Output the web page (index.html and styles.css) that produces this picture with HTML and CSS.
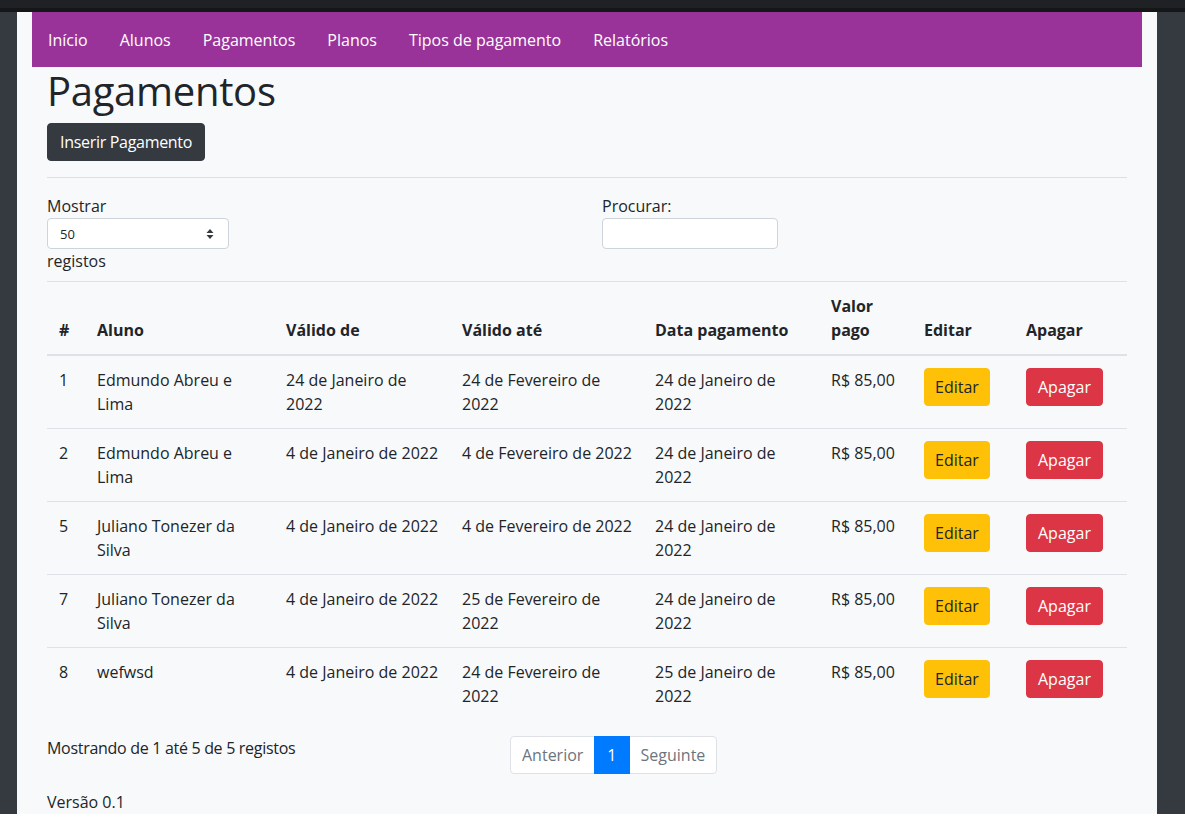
FILE: index.html
```html
<!DOCTYPE html>
<html lang="pt">
<head>
<meta charset="utf-8">
<title>Pagamentos</title>
<link rel="stylesheet" href="styles.css">
</head>
<body>
<div class="topbar"></div>
<div class="page">
  <div class="container">
    <nav class="navbar">
      <a class="nav-link" href="#">Início</a>
      <a class="nav-link" href="#">Alunos</a>
      <a class="nav-link" href="#">Pagamentos</a>
      <a class="nav-link" href="#">Planos</a>
      <a class="nav-link" href="#">Tipos de pagamento</a>
      <a class="nav-link" href="#">Relatórios</a>
    </nav>
    <main class="content">
      <h1 class="title">Pagamentos</h1>
      <a class="btn btn-dark" href="#">Inserir Pagamento</a>
      <hr class="divider">
      <div class="controls">
        <div class="length">
          <span class="label">Mostrar</span>
          <div class="select"><span>50</span>
            <svg width="8" height="10" viewBox="0 0 8 10"><path d="M4 0 L7.5 4 H0.5 Z M4 10 L7.5 6 H0.5 Z" fill="#343a40"/></svg>
          </div>
          <span class="label">registos</span>
        </div>
        <div class="filter">
          <span class="label">Procurar:</span>
          <div class="search"></div>
        </div>
      </div>
      <table class="table">
        <thead>
          <tr>
            <th class="c-num">#</th>
            <th class="c-aluno">Aluno</th>
            <th class="c-de">Válido de</th>
            <th class="c-ate">Válido até</th>
            <th class="c-data">Data pagamento</th>
            <th class="c-valor">Valor pago</th>
            <th class="c-edit">Editar</th>
            <th class="c-del">Apagar</th>
          </tr>
        </thead>
        <tbody>
          <tr>
            <td>1</td><td>Edmundo Abreu e Lima</td><td class="d-de">24 de Janeiro de 2022</td><td class="d-ate">24 de Fevereiro de 2022</td><td>24 de Janeiro de 2022</td><td>R$ 85,00</td>
            <td><a class="btn btn-warning" href="#">Editar</a></td><td><a class="btn btn-danger" href="#">Apagar</a></td>
          </tr>
          <tr>
            <td>2</td><td>Edmundo Abreu e Lima</td><td class="d-de">4 de Janeiro de 2022</td><td class="d-ate">4 de Fevereiro de 2022</td><td>24 de Janeiro de 2022</td><td>R$ 85,00</td>
            <td><a class="btn btn-warning" href="#">Editar</a></td><td><a class="btn btn-danger" href="#">Apagar</a></td>
          </tr>
          <tr>
            <td>5</td><td>Juliano Tonezer da Silva</td><td class="d-de">4 de Janeiro de 2022</td><td class="d-ate">4 de Fevereiro de 2022</td><td>24 de Janeiro de 2022</td><td>R$ 85,00</td>
            <td><a class="btn btn-warning" href="#">Editar</a></td><td><a class="btn btn-danger" href="#">Apagar</a></td>
          </tr>
          <tr>
            <td>7</td><td>Juliano Tonezer da Silva</td><td class="d-de">4 de Janeiro de 2022</td><td class="d-ate">25 de Fevereiro de 2022</td><td>24 de Janeiro de 2022</td><td>R$ 85,00</td>
            <td><a class="btn btn-warning" href="#">Editar</a></td><td><a class="btn btn-danger" href="#">Apagar</a></td>
          </tr>
          <tr>
            <td>8</td><td>wefwsd</td><td class="d-de">4 de Janeiro de 2022</td><td class="d-ate">24 de Fevereiro de 2022</td><td>25 de Janeiro de 2022</td><td>R$ 85,00</td>
            <td><a class="btn btn-warning" href="#">Editar</a></td><td><a class="btn btn-danger" href="#">Apagar</a></td>
          </tr>
        </tbody>
      </table>
      <div class="table-footer">
        <div class="info">Mostrando de 1 até 5 de 5 registos</div>
        <ul class="pagination">
          <li class="page-item disabled"><a class="page-link" href="#">Anterior</a></li>
          <li class="page-item active"><a class="page-link" href="#">1</a></li>
          <li class="page-item disabled"><a class="page-link" href="#">Seguinte</a></li>
        </ul>
      </div>
      <footer class="version">Versão 0.1</footer>
    </main>
  </div>
</div>
</body>
</html>
```
FILE: styles.css
```css
* { box-sizing: border-box; }
html, body { margin: 0; padding: 0; background: #fff; }
body {
  font-family: "Open Sans", "Noto Sans", sans-serif;
  font-size: 16px;
  line-height: 24px;
  color: #212529;
}
a { text-decoration: none; }

.topbar {
  height: 12px;
  background: #202124;
  border-bottom: 4px solid #151617;
}
.page {
  background: #343a40;
  padding: 0 28px 0 17px;
}
.container {
  width: 1140px;
  background: #f8f9fa;
  padding: 0 15px;
}
.navbar {
  height: 55px;
  background: #993399;
  display: flex;
  align-items: center;
}
.nav-link {
  color: #fff;
  padding: 0 16px;
  line-height: 24px;
}
.content { padding: 0 15px; }
.title {
  font-size: 40px;
  font-weight: 500;
  line-height: 48px;
  letter-spacing: -0.3px;
  margin: 0 0 8px;
}
.btn {
  display: inline-block;
  padding: 6px 12px;
  border: 1px solid transparent;
  border-radius: 4px;
  font-size: 16px;
  line-height: 24px;
  white-space: nowrap;
}
.btn-dark { background: #343a40; border-color: #343a40; color: #fff; letter-spacing: -0.3px; }
.btn-warning { background: #ffc107; border-color: #ffc107; color: #212529; padding: 6px 10px; }
.btn-danger { background: #dc3545; border-color: #dc3545; color: #fff; padding: 6px 11px; }
.divider {
  margin: 16px 0;
  border: 0;
  border-top: 1px solid rgba(0,0,0,.1);
}
.controls {
  display: grid;
  grid-template-columns: 555px 1fr;
}
.label { display: block; }
.select {
  width: 182px;
  height: 31px;
  background: #fff;
  border: 1px solid #ced4da;
  border-radius: 4px;
  display: flex;
  align-items: center;
  justify-content: space-between;
  padding: 0 14px 0 12px;
  font-size: 13px;
}
.search {
  width: 176px;
  height: 31px;
  background: #fff;
  border: 1px solid #ced4da;
  border-radius: 4px;
}
.table {
  width: 100%;
  margin-top: 8px;
  border-collapse: collapse;
  table-layout: fixed;
}
.table th, .table td {
  padding: 12px;
  text-align: left;
  border-top: 1px solid #dee2e6;
}
.table th {
  vertical-align: bottom;
  border-bottom: 2px solid #dee2e6;
  font-weight: 700;
}
.table td { vertical-align: top; }
.table td.d-de, .table td.d-ate { padding-right: 6px; }
.c-num { width: 38px; }
.c-aluno { width: 189px; }
.c-de { width: 176px; }
.c-ate { width: 193px; }
.c-data { width: 176px; }
.c-valor { width: 93px; }
.c-edit { width: 102px; }
.c-del { width: 113px; }

.table-footer {
  display: grid;
  grid-template-columns: 463px 1fr;
  margin-top: 16px;
  align-items: start;
}
.info { letter-spacing: -0.3px; }
.pagination {
  display: flex;
  list-style: none;
  margin: 0;
  padding: 0;
}
.page-link {
  display: block;
  padding: 8px 11px;
  line-height: 20px;
  border: 1px solid #dee2e6;
  background: #fff;
  color: #6c757d;
  margin-left: -1px;
}
.page-item:first-child .page-link { margin-left: 0; border-radius: 4px 0 0 4px; }
.page-item:last-child .page-link { border-radius: 0 4px 4px 0; }
.page-item.active .page-link { background: #007bff; border-color: #007bff; color: #fff; position: relative; z-index: 1; padding: 8px 12px; }
.version { margin-top: 16px; }
```
